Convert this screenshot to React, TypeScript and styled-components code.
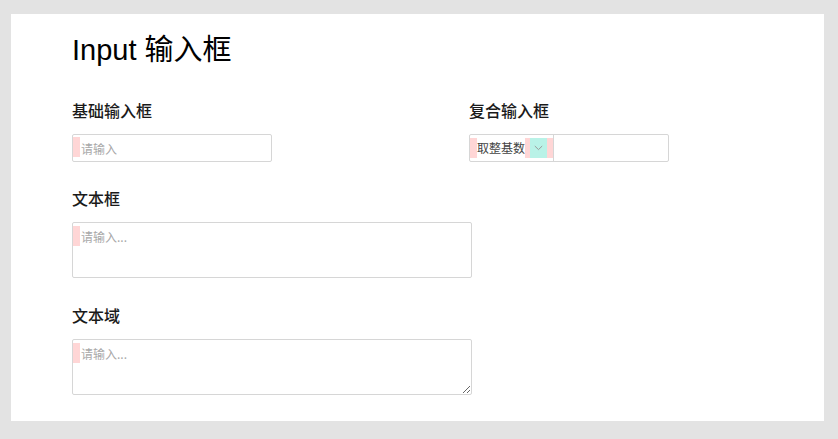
import React from "react";
import styled, { createGlobalStyle } from "styled-components";

const GlobalStyle = createGlobalStyle`
  html, body {
    margin: 0;
    padding: 0;
    background: #e3e3e3;
  }
  body {
    font-family: "Liberation Sans", "Noto Sans CJK SC", sans-serif;
    color: #111;
  }
  #root {
    padding: 14px 14px 18px 11px;
  }
`;

const Panel = styled.main`
  background: #ffffff;
  padding: 16px 61px 26px 61px;
  display: flex;
  flex-direction: column;
`;

const Title = styled.h1`
  margin: 0;
  font-size: 29px;
  line-height: 41px;
  font-weight: 400;
  color: #000;
`;

const Row = styled.div<{ $top: number }>`
  display: grid;
  grid-template-columns: 397px 1fr;
  margin-top: ${(p) => p.$top}px;
`;

const Section = styled.section<{ $top?: number }>`
  display: flex;
  flex-direction: column;
  align-items: flex-start;
  gap: 12px;
  margin-top: ${(p) => p.$top ?? 0}px;
`;

const Label = styled.h2`
  margin: 0;
  font-size: 16px;
  line-height: 24px;
  font-weight: 500;
  color: #1a1a1a;
  font-family: "Noto Sans CJK SC", sans-serif;
`;

const pinkMark = `linear-gradient(#ffd6d6, #ffd6d6) no-repeat`;

const TextInput = styled.input`
  box-sizing: border-box;
  width: 200px;
  height: 28px;
  margin: 0;
  border: 1px solid #d6d6d6;
  border-radius: 2px;
  padding: 0 6px 0 8px;
  font-family: "Noto Sans CJK SC", sans-serif;
  font-size: 12px;
  color: #333;
  outline: none;
  background: ${pinkMark} 0 2px / 7px 20px, #fff;
  &::placeholder {
    color: #a8a8a8;
  }
`;

const TextArea = styled.textarea<{ $resizable?: boolean }>`
  box-sizing: border-box;
  display: block;
  width: 400px;
  height: 56px;
  margin: 0;
  border: 1px solid #d6d6d6;
  border-radius: 2px;
  padding: 4px 6px 4px 8px;
  font-family: "Noto Sans CJK SC", sans-serif;
  font-size: 12px;
  line-height: 20px;
  color: #333;
  outline: none;
  resize: ${(p) => (p.$resizable ? "both" : "none")};
  background: ${pinkMark} 0 3px / 7px 20px, #fff;
  &::placeholder {
    color: #a8a8a8;
  }
`;

const Compound = styled.div`
  box-sizing: border-box;
  display: flex;
  align-items: stretch;
  width: 200px;
  height: 28px;
  border: 1px solid #d6d6d6;
  border-radius: 2px;
  background: #fff;
`;

const SelectPart = styled.div`
  display: flex;
  align-items: center;
  border-right: 1px solid #d6d6d6;
  font-family: "Noto Sans CJK SC", sans-serif;
  font-size: 12px;
  color: #444;
`;

const Mark = styled.span<{ $w: number; $color?: string }>`
  display: flex;
  align-items: center;
  justify-content: center;
  width: ${(p) => p.$w}px;
  height: 20px;
  background: ${(p) => p.$color ?? "#ffd6d6"};
`;

const SelectText = styled.span`
  width: 48px;
  line-height: 20px;
  white-space: nowrap;
`;

const InnerInput = styled.input`
  flex: 1;
  min-width: 0;
  border: none;
  outline: none;
  padding: 0 6px;
  margin: 0;
  background: transparent;
  font-family: "Noto Sans CJK SC", sans-serif;
  font-size: 12px;
`;

const Chevron = () => (
  <svg width="9" height="6" viewBox="0 0 9 6" fill="none">
    <path d="M0.8 1 L4.5 4.6 L8.2 1" stroke="#9a9a9a" strokeWidth="1" />
  </svg>
);

export default function App() {
  return (
    <>
      <GlobalStyle />
      <Panel>
        <Title>Input 输入框</Title>
        <Row $top={27}>
          <Section>
            <Label>基础输入框</Label>
            <TextInput placeholder="请输入" />
          </Section>
          <Section>
            <Label>复合输入框</Label>
            <Compound>
              <SelectPart>
                <Mark $w={7} />
                <SelectText>取整基数</SelectText>
                <Mark $w={5} />
                <Mark $w={17} $color="#b9f2e7">
                  <Chevron />
                </Mark>
                <Mark $w={6} />
              </SelectPart>
              <InnerInput />
            </Compound>
          </Section>
        </Row>
        <Section $top={24}>
          <Label>文本框</Label>
          <TextArea placeholder="请输入..." />
        </Section>
        <Section $top={25}>
          <Label>文本域</Label>
          <TextArea $resizable placeholder="请输入..." />
        </Section>
      </Panel>
    </>
  );
}
